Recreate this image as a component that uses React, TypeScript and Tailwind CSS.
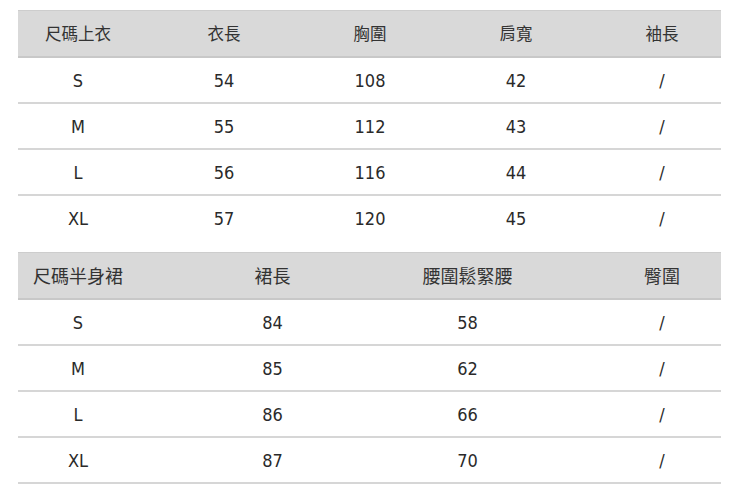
const top = {
  head: ["尺碼上衣", "衣長", "胸圍", "肩寬", "袖長"],
  rows: [
    ["S", "54", "108", "42", "/"],
    ["M", "55", "112", "43", "/"],
    ["L", "56", "116", "44", "/"],
    ["XL", "57", "120", "45", "/"],
  ],
};

const skirt = {
  head: ["尺碼半身裙", "裙長", "腰圍鬆緊腰", "臀圍"],
  rows: [
    ["S", "84", "58", "/"],
    ["M", "85", "62", "/"],
    ["L", "86", "66", "/"],
    ["XL", "87", "70", "/"],
  ],
};

// per-column padding so the text centres land where the original table put them
const topCols = ["pr-[13px]", "", "", "", "pl-[14px]"];
const skirtCols = ["pr-[37px]", "", "", "pl-[38px]"];

function SizeTable({
  data,
  grid,
  cols,
  headSize,
  last,
}: {
  data: { head: string[]; rows: string[][] };
  grid: string;
  cols: string[];
  headSize: string;
  last?: boolean;
}) {
  return (
    <div className={last ? "border-b-2 border-[#d6d6d6]" : ""}>
      <div
        className={`grid h-[46px] items-center border-t border-[#cdcdcd] bg-[#d9d9d9] text-[#333] font-['Noto_Sans_CJK_TC',sans-serif] ${grid} ${headSize}`}
      >
        {data.head.map((h, i) => (
          <div key={h} className={`text-center ${cols[i]}`}>
            {h}
          </div>
        ))}
      </div>
      {data.rows.map((r, ri) => (
        <div
          key={r[0]}
          className={`grid h-[46px] items-center border-t-2 text-[18px] text-[#2a2a2a] ${grid} ${
            ri === 0 ? "border-[#c8c8c8]" : "border-[#d6d6d6]"
          }`}
        >
          {r.map((c, i) => (
            <div key={i} className={`text-center ${cols[i]}`}>
              {c}
            </div>
          ))}
        </div>
      ))}
    </div>
  );
}

export default function App() {
  return (
    <div className="h-[498px] w-[750px] bg-white pt-[10px] pl-[18px] font-['DejaVu_Sans_Condensed','Noto_Sans','Noto_Sans_CJK_TC',sans-serif]">
      <div className="w-[703px]">
        <SizeTable
          data={top}
          grid="grid-cols-[133px_146px_146px_146px_132px]"
          cols={topCols}
          headSize="text-[16.5px]"
        />
        <div className="h-[12px]" />
        <SizeTable
          data={skirt}
          grid="grid-cols-[157px_195px_195px_156px]"
          cols={skirtCols}
          headSize="text-[18px]"
          last
        />
      </div>
    </div>
  );
}
